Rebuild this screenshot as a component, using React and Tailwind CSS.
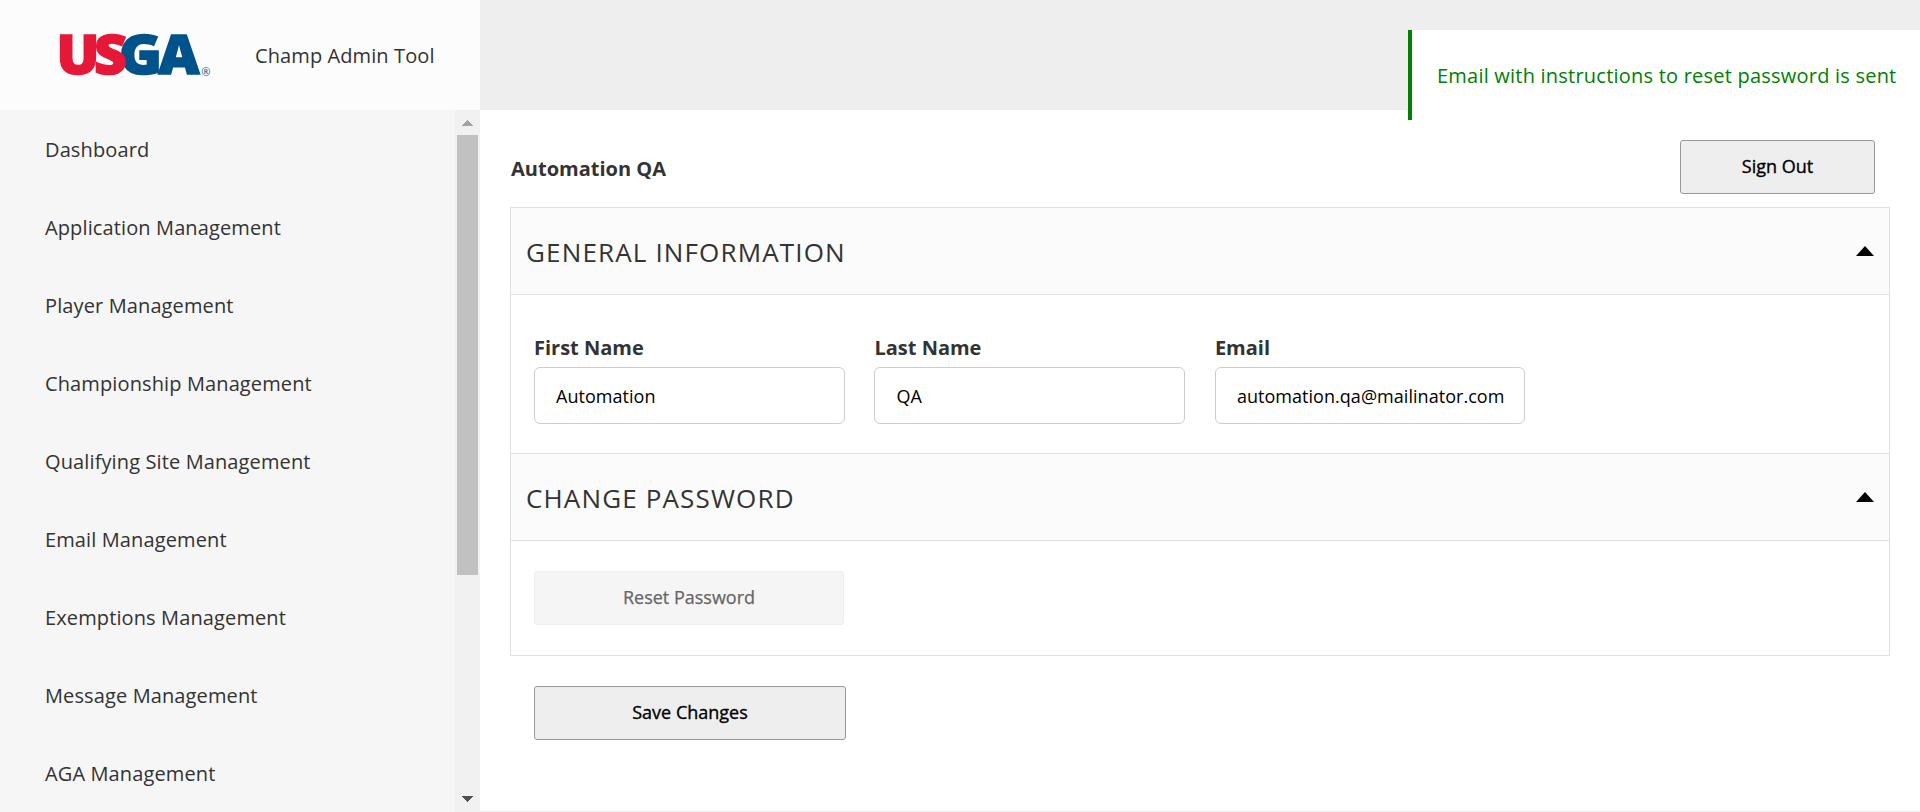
const navItems = [
  'Dashboard',
  'Application Management',
  'Player Management',
  'Championship Management',
  'Qualifying Site Management',
  'Email Management',
  'Exemptions Management',
  'Message Management',
  'AGA Management',
];

function Logo() {
  return (
    <svg
      width="166"
      height="110"
      viewBox="50 0 166 110"
      className="ml-[50px] shrink-0"
      fontFamily="'Open Sans', sans-serif"
      fontWeight="800"
      fontSize="55"
      strokeWidth="1.6"
      role="img"
      aria-label="USGA"
    >
      <text x="119" y="74.4" fill="#00528a" stroke="#00528a" textLength="43" lengthAdjust="spacingAndGlyphs">G</text>
      <text x="158.5" y="74.4" fill="#00528a" stroke="#00528a" textLength="41" lengthAdjust="spacingAndGlyphs">A</text>
      <text x="56.5" y="74.4" fill="#e51937" stroke="#e51937" textLength="43" lengthAdjust="spacingAndGlyphs">U</text>
      <text x="94" y="74.4" fill="#e51937" stroke="#e51937" textLength="33" lengthAdjust="spacingAndGlyphs">S</text>
      <text x="201.3" y="76" fill="#00528a" strokeWidth="0" fontSize="11" fontWeight="400">®</text>
    </svg>
  );
}

function Scrollbar() {
  return (
    <div className="flex w-[25px] shrink-0 flex-col items-center bg-[#f1f1f1]">
      <svg width="25" height="25" className="shrink-0" shapeRendering="crispEdges">
        <path d="M7 16 L12.5 10 L18 16 Z" fill="#a3a3a3" />
      </svg>
      <div className="h-[440px] w-[21px] bg-[#c1c1c1]" />
      <svg width="25" height="25" className="mt-auto shrink-0" shapeRendering="crispEdges">
        <path d="M7 9 L12.5 15 L18 9 Z" fill="#505050" />
      </svg>
    </div>
  );
}

function SectionHeader({ children }) {
  return (
    <div className="flex h-[87px] items-center justify-between border-b border-[#e1e1e1] bg-[#fbfbfb] pr-[15px] pl-[15px]">
      <h2 className="pt-[3px] text-[26px] tracking-[1.15px] text-[#333]">{children}</h2>
      <svg width="18" height="10" className="mb-[1px]">
        <path d="M0 10 L9 0 L18 10 Z" fill="#000" />
      </svg>
    </div>
  );
}

function Field({ label, value }) {
  return (
    <label className="flex w-[310.6px] flex-col">
      <span className="mb-[4px] text-[20px] leading-[30px] font-bold">{label}</span>
      <span className="flex h-[57px] items-center rounded-[6px] border border-[#ccc] bg-white pt-[2px] pl-[21px] text-[18px] tracking-[0.04px] text-black">
        {value}
      </span>
    </label>
  );
}

export default function App() {
  return (
    <div className="relative flex h-[812px] w-[1920px] overflow-hidden bg-white font-['Open_Sans',sans-serif] text-[#333]">
      <aside className="flex w-[480px] shrink-0 flex-col">
        <div className="flex h-[110px] items-center bg-[#fcfcfc]">
          <Logo />
          <span className="ml-[39px] pt-[2px] text-[20px] tracking-[0.1px]">Champ Admin Tool</span>
        </div>
        <div className="flex min-h-0 flex-1 bg-[#f6f6f6]">
          <nav className="min-h-0 flex-1 overflow-hidden pl-[45px]">
            {navItems.map((item) => (
              <a key={item} className="flex h-[78px] items-center pt-[2px] text-[20px] tracking-[0.12px]">
                {item}
              </a>
            ))}
          </nav>
          <Scrollbar />
        </div>
      </aside>

      <main className="flex min-w-0 flex-1 flex-col border-b border-[#eee]">
        <div className="h-[110px] shrink-0 bg-[#eee]" />
        <div className="px-[30px]">
          <div className="flex h-[97px] items-start justify-between pt-[30px] pr-[15px]">
            <h1 className="pl-[1px] text-[20px] leading-[58px] font-bold">Automation QA</h1>
            <button className="h-[54px] w-[195px] rounded-[3px] border border-[#999] bg-[#eee] pb-[2px] text-[18px] font-medium text-black [-webkit-text-stroke:0.35px_black]">
              Sign Out
            </button>
          </div>

          <div className="border border-[#e1e1e1]">
            <SectionHeader>GENERAL INFORMATION</SectionHeader>
            <div className="flex h-[158px] gap-[29.85px] pt-[38px] pl-[23px]">
              <Field label="First Name" value="Automation" />
              <Field label="Last Name" value="QA" />
              <Field label="Email" value="automation.qa@mailinator.com" />
            </div>
            <div className="border-t border-[#e1e1e1]">
              <SectionHeader>CHANGE PASSWORD</SectionHeader>
            </div>
            <div className="py-[30px] pl-[23px]">
              <button className="block h-[54px] w-[310px] rounded-[3px] border border-[#eee] bg-[#f5f5f5] pb-[2px] text-[18px] text-[#666] [-webkit-text-stroke:0.25px_#666]">
                Reset Password
              </button>
            </div>
          </div>

          <button className="mt-[30px] ml-[24px] block h-[54px] w-[312px] rounded-[3px] border border-[#999] bg-[#eee] pb-[2px] text-[18px] font-medium text-black [-webkit-text-stroke:0.35px_black]">
            Save Changes
          </button>
        </div>
      </main>

      <div className="absolute top-[30px] right-0 flex h-[90px] w-[512px] items-center border-l-4 border-[#008000] bg-white pt-[2px] pl-[25px] text-[20px] tracking-[0.22px] whitespace-nowrap text-[#008000]">
        Email with instructions to reset password is sent
      </div>
    </div>
  );
}
